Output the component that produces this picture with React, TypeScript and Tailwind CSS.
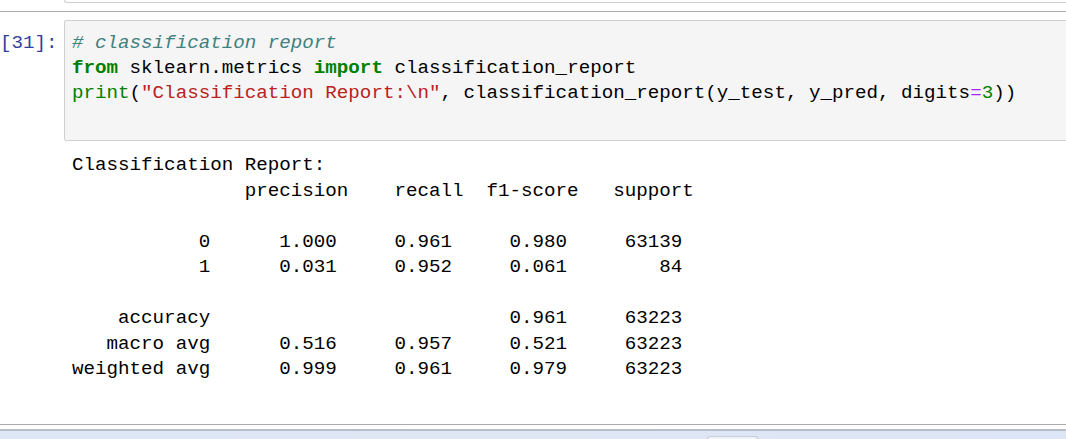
const mono = "font-['Liberation_Mono','DejaVu_Sans_Mono',monospace] text-[19.2px]";

const report = [
  "Classification Report:",
  "               precision    recall  f1-score   support",
  "",
  "           0      1.000     0.961     0.980     63139",
  "           1      0.031     0.952     0.061        84",
  "",
  "    accuracy                          0.961     63223",
  "   macro avg      0.516     0.957     0.521     63223",
  "weighted avg      0.999     0.961     0.979     63223",
].join("\n");

const App = () => {
  return (
    <div className="h-[439px] w-[1066px] overflow-hidden bg-white flex flex-col">
      {/* previous cell edge */}
      <div className="ml-[64px] h-[3px] border-l border-b border-[#cfcfcf] rounded-bl-[3px] bg-white" />
      <div className="mt-[8px] h-px bg-[#adadad]" />

      {/* input cell */}
      <div className="mt-[8px] flex">
        <div className={`w-[64px] shrink-0 pt-[11px] pr-[8px] text-right leading-[25px] text-[#303F9F] ${mono}`}>
          [31]:
        </div>
        <div className="flex-1 -mr-[20px] h-[121px] border border-[#cfcfcf] rounded-[2px] bg-[#f5f5f5] pl-[7px] pt-[10px]">
          <pre className={`${mono} leading-[25px] text-black`}>
            <span className="italic text-[#408080]"># classification report</span>
            {"\n"}
            <span className="font-bold text-[#008000]">from</span> sklearn.metrics{" "}
            <span className="font-bold text-[#008000]">import</span> classification_report
            {"\n"}
            <span className="text-[#008000]">print</span>(
            <span className="text-[#BA2121]">"Classification Report:\n"</span>, classification_report(y_test, y_pred, digits
            <span className="text-[#AA22FF]">=</span>
            <span className="text-[#008000]">3</span>))
          </pre>
        </div>
      </div>

      {/* output */}
      <div className="pl-[72px] pt-[12px]">
        <pre className={`${mono} leading-[25.5px] text-black`}>{report}</pre>
      </div>

      {/* bottom edge */}
      <div className="mt-auto">
        <div className="h-px bg-[#aaaaaa]" />
        <div className="h-[4px] bg-white" />
        <div className="h-[2px] bg-[#b8bec9]" />
        <div className="h-[8px] bg-gradient-to-r from-[#dde7f6] via-[#dfe6f4] to-[#dde6f6] flex items-end">
          <div className="ml-[707px] w-[51px] h-[3px] rounded-t-[4px] border border-b-0 border-[#c9d0dc] bg-[#eef2f9]" />
        </div>
      </div>
    </div>
  );
};

export default App;
